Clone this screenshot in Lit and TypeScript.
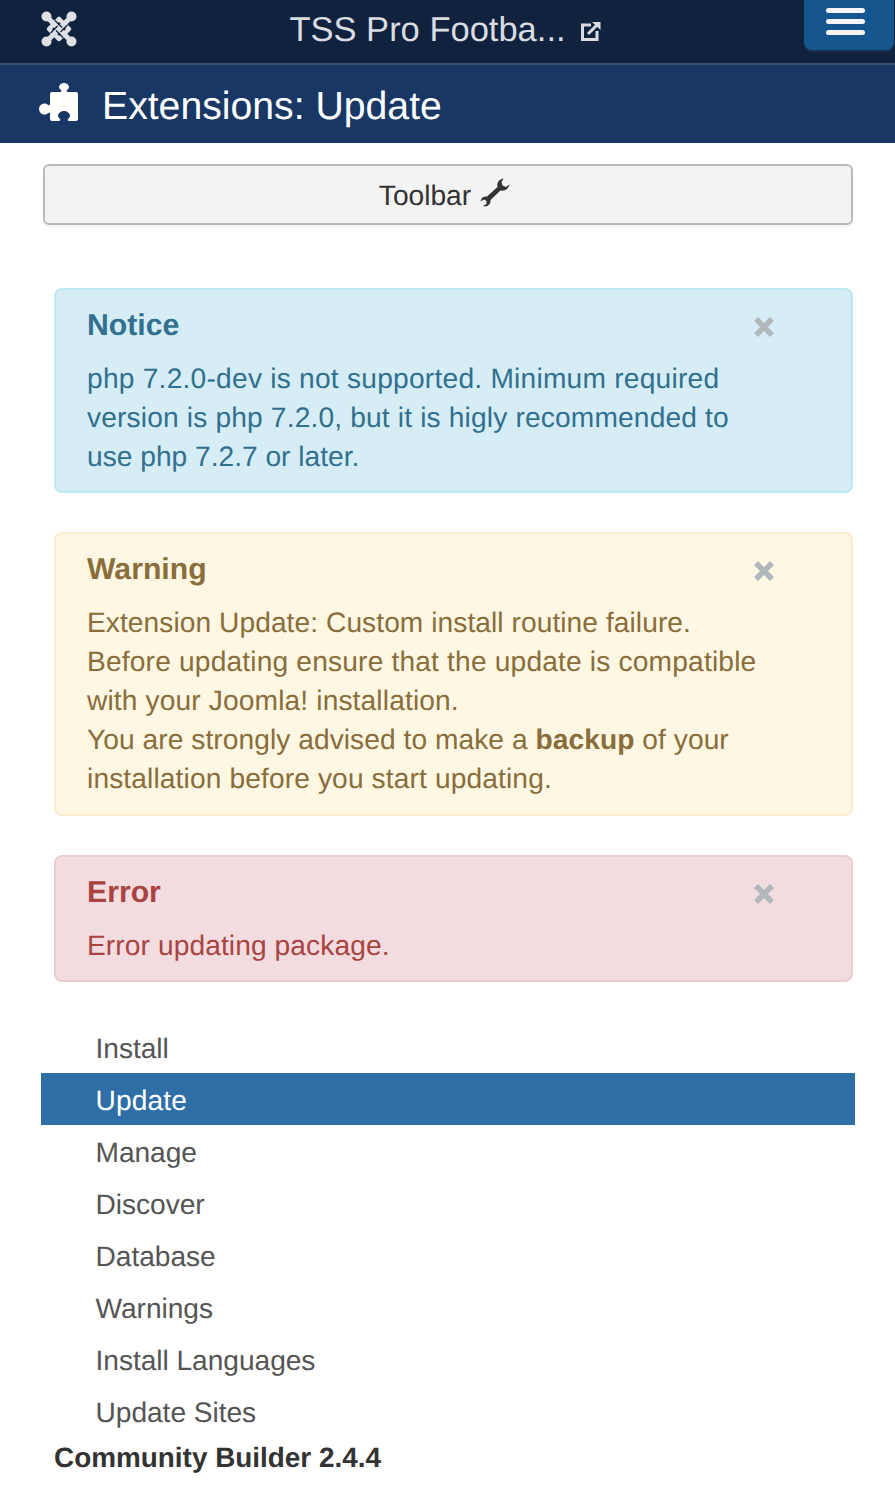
import { LitElement, html, css, svg } from "lit";
import { customElement } from "lit/decorators.js";

const NAV = ["Install", "Update", "Manage", "Discover", "Database", "Warnings", "Install Languages", "Update Sites"];

const line = (content: unknown, spacing: number) =>
  html`<span class="line" style="letter-spacing:${spacing}px">${content}</span>`;

@customElement("app-root")
export class AppRoot extends LitElement {
  static styles = css`
    :host { display: block; width: 895px; height: 1500px; overflow: hidden; background: #fff; font-family: "Liberation Sans", Arial, sans-serif; font-size: 28.17px; line-height: 39px; color: #333; text-rendering: geometricPrecision; }
    .navbar { height: 63px; background: #10223e; border-bottom: 2px solid #3a506f; display: flex; align-items: flex-start; position: relative; }
    .logo { width: 36px; height: 36px; margin: 11px 0 0 41px; flex: none; }
    .brand { flex: 1; display: flex; justify-content: center; align-items: center; gap: 14px; height: 60px; padding-right: 40px; color: #d9dce1; font-size: 34.5px; box-sizing: border-box; margin-left: -41px; }
    .brand svg { width: 22px; height: 22px; margin-top: 2px; }
    .toggle { position: absolute; right: 1px; top: -4px; width: 90px; height: 54px; box-sizing: border-box; background: #16568f; border-radius: 0 0 8px 8px; box-shadow: 0 2px 0 #1a3050; display: flex; flex-direction: column; gap: 6px; align-items: center; justify-content: center; padding: 0 7px 3px 0; }
    .toggle i { display: block; width: 39px; height: 5px; border-radius: 3px; background: #f5f5f5; }
    .subhead { height: 78px; background: #183765; display: flex; align-items: center; color: #fff; font-size: 39.2px; padding-left: 39px; gap: 22px; }
    .subhead span { margin-top: 4px; }
    .subhead svg { width: 41px; height: 41px; flex: none; margin-top: -1px; }
    .content { padding: 21px 42px 0 43px; }
    .btn { height: 61px; box-sizing: border-box; border: 2px solid #bbb; border-radius: 6px; background: #f3f3f3; display: flex; align-items: center; justify-content: center; gap: 9px; color: #333; box-shadow: 0 2px 2px rgba(0,0,0,.05); padding: 1px 7px 0 0; }
    .btn svg { width: 30px; height: 30px; margin-top: -4px; }
    .alerts { margin: 63px 0 0 11px; display: flex; flex-direction: column; gap: 39px; }
    .alert { position: relative; border: 2px solid; border-radius: 8px; padding: 16px 32px 15.33px 31px; }
    .alert h4 { margin: 0 0 14px; font-size: 30.2px; line-height: 39px; font-weight: 700; }
    .alert p { margin: 0; }
    .line { display: block; white-space: nowrap; }
    .close { position: absolute; right: 76px; top: 26px; width: 22px; height: 22px; }
    .info { background: #d7edf6; border-color: #bce8f1; color: #31708f; }
    .warn { background: #fdf7e3; border-color: #faebcc; color: #8a6d3b; }
    .err { background: #f2dcdf; border-color: #ebccd1; color: #a94442; }
    .nav { list-style: none; margin: 39px -2px 0 -2px; padding: 0; }
    .nav li { height: 52px; line-height: 54px; padding-left: 54.5px; color: #555; letter-spacing: -0.05px; }
    .nav li.on { background: #2f6fa7; color: #fff; letter-spacing: 0.1px; }
    .foot { margin: 0 0 0 11px; font-weight: 700; font-size: 27.9px; line-height: 42px; color: #333; }
  `;

  render() {
    const x = html`<svg class="close" viewBox="0 0 22 22"><path d="M3 3 19 19M19 3 3 19" stroke="#b0b8bc" stroke-width="5.500" fill="none"/></svg>`;
    return html`
      <div class="navbar">
        <svg class="logo" viewBox="0 0 36 36" fill="none">
          <path d="M5.500 5.500 30.500 30.500M30.500 5.500 5.500 30.500" stroke="#dfe0e3" stroke-width="5"/>
          <path d="M18 8 28 18 18 28 8 18Z" stroke="#dfe0e3" stroke-width="4.500" stroke-linejoin="round"/>
          ${[0, 90, 180, 270].map(
            (a) => svg`<path d="M14 9.500 21 16.500" stroke="#10223e" stroke-width="1.200" transform="rotate(${a} 18 18)"/>`
          )}
          <g fill="#dfe0e3"><circle cx="5.500" cy="5.500" r="5"/><circle cx="30.500" cy="5.500" r="5"/><circle cx="5.500" cy="30.500" r="5"/><circle cx="30.500" cy="30.500" r="5"/></g>
        </svg>
        <div class="brand"><span>TSS Pro Footba...</span>
          <svg viewBox="0 0 22 22" fill="none" stroke="#d9dce1" stroke-width="3"><path d="M11 5H2.500V19.500H17V11"/><path d="M8 14 18.500 3.500"/><path d="M12 2H20.500V10Z" stroke="none" fill="#d9dce1"/></svg>
        </div>
        <div class="toggle"><i></i><i></i><i></i></div>
      </div>
      <div class="subhead">
        <svg viewBox="0 0 41 41" fill="#fff"><path d="M13 9H21.500C22.500 9 22.500 8 22 7 21 6 20 5.500 20 4.500A5 4.500 0 0 1 30 4.500C30 5.500 29 6 28 7 27.500 8 27.500 9 28.500 9H37A2 2 0 0 1 39 11V36A2 2 0 0 1 37 38H30C29 38 28.500 37 29 36 30 35 31 34 31 33A6 5 0 0 0 19 33C19 34 20 35 21 36 21.500 37 21 38 20 38H13A2 2 0 0 1 11 36V31C11 30 10 29.500 9 30 8 31 7 31.500 5.500 31.500A5.500 5.500 0 0 1 5.500 20.500C7 20.500 8 21 9 22 10 22.500 11 22 11 21V11A2 2 0 0 1 13 9Z"/></svg>
        <span>Extensions: Update</span>
      </div>
      <div class="content">
        <div class="btn"><span>Toolbar</span>
          <svg viewBox="0 0 30 30" fill="#333"><path d="M23.500.5C19.500 1 16.500 4.500 17.500 9L7 18.500C3.500 18 1 20 .5 23.500L4 21.500 6.500 23V26L3 28C7 29.500 11 26.500 10.500 22L20.500 12.500C25 13.500 28.500 10.500 29.500 6.500L26 9 22.500 7.500 21.500 4Z"/></svg>
        </div>
        <div class="alerts">
          <div class="alert info">${x}<h4>Notice</h4><p>
            ${line("php 7.2.0-dev is not supported. Minimum required", 0.23)}
            ${line("version is php 7.2.0, but it is higly recommended to", 0.154)}
            ${line("use php 7.2.7 or later.", 0)}
          </p></div>
          <div class="alert warn">${x}<h4>Warning</h4><p>
            ${line("Extension Update: Custom install routine failure.", 0.06)}
            ${line("Before updating ensure that the update is compatible", 0.17)}
            ${line("with your Joomla! installation.", 0.13)}
            ${line(html`You are strongly advised to make a <b>backup</b> of your`, 0.055)}
            ${line("installation before you start updating.", 0.12)}
          </p></div>
          <div class="alert err">${x}<h4>Error</h4><p>${line("Error updating package.", 0.09)}</p></div>
        </div>
        <ul class="nav">${NAV.map((n) => html`<li class=${n === "Update" ? "on" : ""}>${n}</li>`)}</ul>
        <div class="foot">Community Builder 2.4.4</div>
      </div>
    `;
  }
}
